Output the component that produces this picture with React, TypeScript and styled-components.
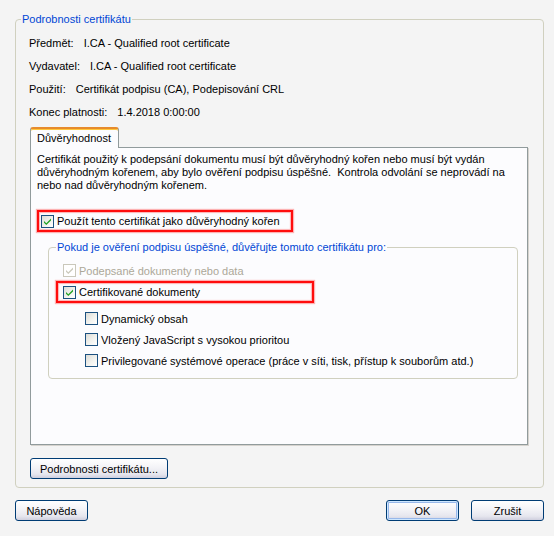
import React from 'react';
import styled, { createGlobalStyle } from 'styled-components';

const GlobalStyle = createGlobalStyle`
  html, body {
    margin: 0;
    padding: 0;
    background: #f4f4f4;
  }
  body {
    font-family: "Liberation Sans", Arial, sans-serif;
    font-size: 11px;
    color: #000;
  }
`;

const Dialog = styled.div`
  width: 554px;
  height: 536px;
  box-sizing: border-box;
  padding: 13px 10px 0 15px;
  display: flex;
  flex-direction: column;
`;

const GroupBox = styled.fieldset<{ $padLeft: number }>`
  margin: 0;
  min-width: 0;
  box-sizing: border-box;
  border: 1px solid #d0d0bf;
  border-radius: 4px;
  padding: 0 14px 8px ${p => p.$padLeft}px;
  display: flex;
  flex-direction: column;
  align-items: flex-start;
`;

const InnerGroup = styled(GroupBox)`
  width: 470px;
  margin: 9px 0 0 11px;
  padding-top: 6px;
  padding-bottom: 7px;
  padding-right: 0;
`;

const GroupTitle = styled.legend<{ $shift: number }>`
  color: #0046d5;
  padding: 0 1px;
  margin-left: ${p => p.$shift}px;
  line-height: 13px;
`;

const InfoList = styled.div`
  display: flex;
  flex-direction: column;
  margin: 5px 0 0 -1px;
`;

const InfoRow = styled.div`
  display: flex;
  align-items: center;
  gap: 10px;
  height: 23px;
`;

const Tabs = styled.div`
  margin-top: 4px;
  width: 498px;
  display: flex;
  flex-direction: column;
`;

const TabStrip = styled.div`
  display: flex;
  height: 20px;
`;

const Tab = styled.div`
  position: relative;
  z-index: 1;
  width: 89px;
  height: 21px;
  box-sizing: border-box;
  margin-bottom: -1px;
  padding: 3px 0 0 6px;
  background: #fcfcfe;
  border: 1px solid #919b9c;
  border-top: 2px solid #e68b2c;
  border-bottom: none;
  border-radius: 3px 3px 0 0;
  box-shadow: inset 0 1px 0 #ffc73c;
`;

const TabPanel = styled.div`
  height: 298px;
  box-sizing: border-box;
  padding: 5px 6px 0 6px;
  background: #fcfcfe;
  border: 1px solid #919b9c;
  box-shadow: 1px 1px 0 #d6d3ce;
  display: flex;
  flex-direction: column;
  align-items: flex-start;
`;

const Note = styled.p`
  margin: 0;
  line-height: 13px;
  white-space: nowrap;
`;

const Highlight = styled.div<{ $width: number; $padLeft: number; $top: number }>`
  width: ${p => p.$width}px;
  height: 22px;
  box-sizing: border-box;
  margin-top: ${p => p.$top}px;
  padding-left: ${p => p.$padLeft}px;
  border: 2px solid #ff0d0d;
  box-shadow: 0 0 1px 1px rgba(255, 40, 40, 0.35), inset 0 0 1px 1px rgba(255, 40, 40, 0.35);
  display: flex;
  align-items: center;
`;

const CheckRow = styled.label<{ $indent: number; $disabled?: boolean }>`
  display: flex;
  align-items: center;
  gap: 3px;
  height: 21px;
  margin-left: ${p => p.$indent}px;
  color: ${p => (p.$disabled ? '#aca899' : '#000')};
`;

const SubOptions = styled.div`
  display: flex;
  flex-direction: column;
  margin-top: 5px;
`;

const Box = styled.span<{ $disabled?: boolean }>`
  width: 13px;
  height: 13px;
  box-sizing: border-box;
  flex: none;
  display: flex;
  align-items: center;
  justify-content: center;
  border: 1px solid ${p => (p.$disabled ? '#cac8bb' : '#1c5180')};
  background: ${p =>
    p.$disabled ? '#fff' : 'linear-gradient(135deg, #dcdcd7 0%, #f4f4f0 60%, #fff 100%)'};
`;

const Button = styled.button<{ $default?: boolean; $width: number }>`
  width: ${p => p.$width}px;
  height: 21px;
  padding: 0;
  font: inherit;
  color: #000;
  border: 1px solid #003c74;
  border-radius: 3px;
  background: linear-gradient(#ffffff 0%, #f3f3f7 45%, #e6e6ee 80%, #cfcfde 100%);
  box-shadow: ${p => (p.$default ? 'inset 0 0 0 1px #cee7ff, inset 0 0 0 2px #98b8ea' : 'none')};
`;

const DetailButton = styled(Button)`
  margin-top: 13px;
`;

const Footer = styled.div`
  margin-top: 12px;
  display: flex;
  align-items: center;
  gap: 12px;
`;

const Spacer = styled.div`
  flex: 1;
`;

const Check: React.FC<{ checked?: boolean; disabled?: boolean }> = ({ checked, disabled }) => (
  <Box $disabled={disabled}>
    {checked && (
      <svg width="9" height="9" viewBox="0 0 9 9">
        <path
          d="M1 4 L3.3 6.3 L8 1.6 L8 3.4 L3.3 8.1 L1 5.8 Z"
          fill={disabled ? '#cac8bb' : '#21a121'}
        />
      </svg>
    )}
  </Box>
);

const info = [
  ['Předmět:', 'I.CA - Qualified root certificate'],
  ['Vydavatel:', 'I.CA - Qualified root certificate'],
  ['Použití:', 'Certifikát podpisu (CA), Podepisování CRL'],
  ['Konec platnosti:', '1.4.2018 0:00:00'],
];

const subOptions = [
  'Dynamický obsah',
  'Vložený JavaScript s vysokou prioritou',
  'Privilegované systémové operace (práce v síti, tisk, přístup k souborům atd.)',
];

export default function App() {
  return (
    <>
      <GlobalStyle />
      <Dialog>
        <GroupBox $padLeft={14}>
          <GroupTitle $shift={-9}>Podrobnosti certifikátu</GroupTitle>
          <InfoList>
            {info.map(([label, value]) => (
              <InfoRow key={label}>
                <span>{label}</span>
                <span>{value}</span>
              </InfoRow>
            ))}
          </InfoList>

          <Tabs>
            <TabStrip>
              <Tab>Důvěryhodnost</Tab>
            </TabStrip>
            <TabPanel>
              <Note>
                Certifikát použitý k podepsání dokumentu musí být důvěryhodný kořen nebo musí být vydán
                <br />
                důvěryhodným kořenem, aby bylo ověření podpisu úspěšné.&nbsp; Kontrola odvolání se neprovádí na
                <br />
                nebo nad důvěryhodným kořenem.
              </Note>

              <Highlight $width={256} $padLeft={2} $top={18}>
                <CheckRow $indent={0}>
                  <Check checked />
                  Použít tento certifikát jako důvěryhodný kořen
                </CheckRow>
              </Highlight>

              <InnerGroup $padLeft={7}>
                <GroupTitle $shift={0}>
                  Pokud je ověření podpisu úspěšné, důvěřujte tomuto certifikátu pro:
                </GroupTitle>
                <CheckRow $indent={7} $disabled>
                  <Check checked disabled />
                  Podepsané dokumenty nebo data
                </CheckRow>
                <Highlight $width={258} $padLeft={5} $top={0}>
                  <CheckRow $indent={0}>
                    <Check checked />
                    Certifikované dokumenty
                  </CheckRow>
                </Highlight>
                <SubOptions>
                  {subOptions.map(text => (
                    <CheckRow key={text} $indent={29}>
                      <Check />
                      {text}
                    </CheckRow>
                  ))}
                </SubOptions>
              </InnerGroup>
            </TabPanel>
          </Tabs>

          <DetailButton $width={138}>Podrobnosti certifikátu...</DetailButton>
        </GroupBox>

        <Footer>
          <Button $width={73}>Nápověda</Button>
          <Spacer />
          <Button $width={73} $default>
            OK
          </Button>
          <Button $width={73}>Zrušit</Button>
        </Footer>
      </Dialog>
    </>
  );
}
